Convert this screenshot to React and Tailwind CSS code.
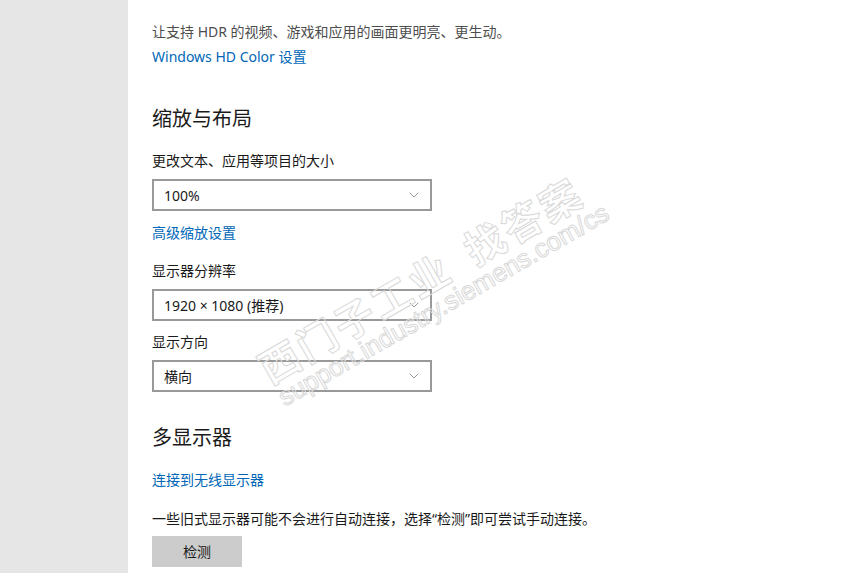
import { ChevronDown } from "lucide-react";

const font = {
  fontFamily: "'Noto Sans', 'Noto Sans CJK SC', sans-serif",
};

const Select = ({ value }) => (
  <div className="mt-[8px] w-[280px] h-[32px] border-2 border-[#999999] flex items-center justify-between pl-[10px] pr-[8px] text-[14px] text-[#1a1a1a]">
    <span>{value}</span>
    <ChevronDown size={16} strokeWidth={1} className="text-[#666666]" />
  </div>
);

const Link = ({ children, className = "" }) => (
  <div className={`text-[14px] leading-[20px] text-[#0067b8] ${className}`}>{children}</div>
);

const Label = ({ children, className = "" }) => (
  <div className={`text-[14px] leading-[20px] text-[#1a1a1a] ${className}`}>{children}</div>
);

const Watermark = () => (
  <div className="pointer-events-none absolute left-[252px] top-[354px] origin-top-left -rotate-[30deg] select-none">
    <div className="flex items-center gap-[22px] text-[40px] leading-[42px] font-bold text-transparent [-webkit-text-stroke:1px_#d9d9d9] tracking-[3px]">
      <span>西门子工业</span>
      <span>找答案</span>
    </div>
    <div className="mt-[-4px] ml-[2px] text-[26px] leading-[30px] text-transparent [-webkit-text-stroke:1px_#d9d9d9] font-['Liberation_Sans',sans-serif]">
      support.industry.siemens.com/cs
    </div>
  </div>
);

export default function App() {
  return (
    <div className="relative flex h-[573px] w-full overflow-hidden bg-white" style={font}>
      <div className="w-[128px] shrink-0 bg-[#e6e6e6]" />
      <div className="flex-1 pl-[24px] pt-[22px]">
        <div className="text-[14px] leading-[20px] text-[#4d4d4d]">
          让支持 HDR 的视频、游戏和应用的画面更明亮、更生动。
        </div>
        <Link className="mt-[5px]">Windows HD Color 设置</Link>

        <h2 className="mt-[38px] text-[20px] leading-[28px] text-[#1a1a1a]">缩放与布局</h2>
        <Label className="mt-[18px]">更改文本、应用等项目的大小</Label>
        <Select value="100%" />
        <Link className="mt-[12px]">高级缩放设置</Link>

        <Label className="mt-[18px]">显示器分辨率</Label>
        <Select value="1920 × 1080 (推荐)" />

        <Label className="mt-[11px]">显示方向</Label>
        <Select value="横向" />

        <h2 className="mt-[32px] text-[20px] leading-[28px] text-[#1a1a1a]">多显示器</h2>
        <Link className="mt-[18px]">连接到无线显示器</Link>
        <Label className="mt-[19px]">
          一些旧式显示器可能不会进行自动连接，选择“检测”即可尝试手动连接。
        </Label>
        <button className="mt-[7px] w-[90px] h-[31px] bg-[#cccccc] text-[14px] text-[#1a1a1a]">
          检测
        </button>
      </div>
      <Watermark />
    </div>
  );
}
